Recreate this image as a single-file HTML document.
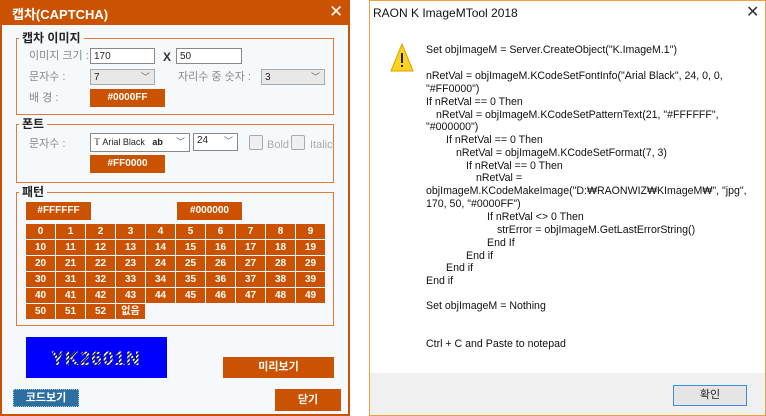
<!DOCTYPE html>
<html><head><meta charset="utf-8"><style>
*{margin:0;padding:0;box-sizing:border-box}
body{width:766px;height:416px;background:#fff;position:relative;overflow:hidden;font-family:"Liberation Sans","Noto Sans CJK KR",sans-serif;font-size:11px;color:#222}
.a{position:absolute;white-space:nowrap}
#L{position:absolute;left:0;top:0;width:350px;height:416px;background:#f5f9fc;border:2px solid #ca5200;border-top:none}
#LT{position:absolute;left:0;top:0;width:350px;height:25px;background:#ca5200;color:#fff;font-weight:bold;font-size:13px}
.grp{position:absolute;border:1px solid #e07a3a}
.lg{position:absolute;background:#f5f9fc;font-weight:bold;font-size:12px;color:#222;padding:0 3px;line-height:14px}
.lbl{position:absolute;color:#888;font-size:11px;line-height:14px}
.inp{position:absolute;background:#fff;border:1px solid #888;font-size:10px;padding-left:3px;line-height:15px}
.sel{position:absolute;background:#e8e8e8;border:1px solid #aaa;font-size:10px;padding-left:3px;line-height:15px}
.btn{position:absolute;background:#ca5200;color:#fff;font-weight:bold;font-size:10px;text-align:center}
.cell{position:absolute;width:29px;height:15px;background:#ca5200;color:#fff;font-weight:bold;font-size:10px;text-align:center;line-height:15px}
.chev{position:absolute;right:4px;top:0;color:#666;font-size:9px}
.cb{position:absolute;width:14px;height:15px;border:1px solid #aaa;background:#f0f0f0;border-radius:2px}
#R{position:absolute;left:369px;top:0;width:397px;height:416px;background:#fff;border:1px solid #f0a040}
.t{position:absolute;white-space:nowrap;font-size:10.6px;color:#111;line-height:13px}
</style></head><body>
<div id="L"></div>
<div id="LT"><span class="a" style="left:12px;top:4px">캡차(CAPTCHA)</span><span class="a" style="left:329px;top:2px;font-size:17px;font-weight:normal">✕</span></div>

<div class="grp" style="left:16px;top:38px;width:318px;height:77px"></div>
<div class="lg" style="left:19px;top:31px">캡차 이미지</div>
<div class="lbl" style="left:29px;top:49px">이미지 크기 :</div>
<div class="inp" style="left:90px;top:48px;width:65px;height:16px">170</div>
<div class="a" style="left:163px;top:50px;font-size:12px;font-weight:bold;color:#333">X</div>
<div class="inp" style="left:176px;top:48px;width:66px;height:16px">50</div>
<div class="lbl" style="left:29px;top:70px">문자수 :</div>
<div class="sel" style="left:90px;top:69px;width:65px;height:16px">7<span class="chev">﹀</span></div>
<div class="lbl" style="left:178px;top:70px">자리수 중 숫자 :</div>
<div class="sel" style="left:261px;top:69px;width:64px;height:16px">3<span class="chev">﹀</span></div>
<div class="lbl" style="left:29px;top:91px">배 경 :</div>
<div class="btn" style="left:90px;top:89px;width:75px;height:18px;line-height:18px">#0000FF</div>

<div class="grp" style="left:16px;top:124px;width:318px;height:59px"></div>
<div class="lg" style="left:19px;top:117px">폰트</div>
<div class="lbl" style="left:29px;top:137px">문자수 :</div>
<div class="inp" style="left:90px;top:133px;width:100px;height:19px;line-height:17px;font-size:9px">𝕋 Arial Black &nbsp; <b>ab</b><span class="chev">﹀</span></div>
<div class="inp" style="left:193px;top:133px;width:45px;height:18px;line-height:14px">24<span class="chev">﹀</span></div>
<div class="cb" style="left:249px;top:135px"></div>
<div class="lbl" style="left:267px;top:138px;color:#aaa">Bold</div>
<div class="cb" style="left:291px;top:135px"></div>
<div class="lbl" style="left:310px;top:138px;color:#aaa">Italic</div>
<div class="btn" style="left:90px;top:155px;width:75px;height:18px;line-height:18px">#FF0000</div>

<div class="grp" style="left:16px;top:192px;width:318px;height:134px"></div>
<div class="lg" style="left:19px;top:185px">패턴</div>
<div class="btn" style="left:26px;top:202px;width:65px;height:18px;line-height:18px">#FFFFFF</div>
<div class="btn" style="left:177px;top:202px;width:65px;height:18px;line-height:18px">#000000</div>

<svg class="a" style="left:26px;top:337px" width="141" height="41" viewBox="0 0 141 41">
<defs><pattern id="p" width="3" height="3" patternUnits="userSpaceOnUse" patternTransform="rotate(45)"><rect width="3" height="3" fill="#fff"/><rect width="1.5" height="3" fill="#222"/></pattern></defs>
<rect width="141" height="41" fill="#0000ff"/>
<text x="70" y="28" text-anchor="middle" font-family="Liberation Sans" font-weight="bold" font-size="19" letter-spacing="1" fill="url(#p)">YK2601N</text>
</svg>
<div class="btn" style="left:223px;top:357px;width:111px;height:21px;line-height:21px;font-size:11px">미리보기</div>
<div class="btn" style="left:13px;top:389px;width:66px;height:18px;line-height:16px;background:#2d6fa0;border:1px dotted #9cc;font-size:11px">코드보기</div>
<div class="btn" style="left:275px;top:389px;width:66px;height:22px;line-height:22px;font-size:11px">닫기</div>

<div id="R">
<div style="position:absolute;left:0;bottom:0;width:395px;height:42px;background:#f0f0f0"></div>
<div class="a" style="left:303px;top:384px;width:74px;height:21px;border:1px solid #3c8ee0;background:#e5e5e5;text-align:center;line-height:19px;font-size:11px">확인</div>
</div>
<div class="a" style="left:373px;top:6px;font-size:12px;color:#111">RAON K ImageMTool 2018</div>
<div class="a" style="left:746px;top:2px;font-size:16px;color:#333">✕</div>
<svg class="a" style="left:390px;top:43px" width="24" height="30" viewBox="0 0 24 30"><path d="M12 1 L23 28 L1 28 Z" fill="#ffd21e" stroke="#d8a400" stroke-width="1"/><rect x="11" y="10" width="2" height="10" fill="#222"/><rect x="11" y="22" width="2" height="2" fill="#222"/></svg>
<div class="t" style="left:426px;top:44px">Set objImageM = Server.CreateObject("K.ImageM.1")</div>
<div class="t" style="left:426px;top:70px">nRetVal = objImageM.KCodeSetFontInfo("Arial Black", 24, 0, 0,</div>
<div class="t" style="left:426px;top:83px">"#FF0000")</div>
<div class="t" style="left:426px;top:96px">If nRetVal == 0 Then</div>
<div class="t" style="left:436px;top:109px">nRetVal = objImageM.KCodeSetPatternText(21, "#FFFFFF",</div>
<div class="t" style="left:426px;top:121px">"#000000")</div>
<div class="t" style="left:446px;top:134px">If nRetVal == 0 Then</div>
<div class="t" style="left:456px;top:147px">nRetVal = objImageM.KCodeSetFormat(7, 3)</div>
<div class="t" style="left:466px;top:160px">If nRetVal == 0 Then</div>
<div class="t" style="left:476px;top:172px">nRetVal =</div>
<div class="t" style="left:426px;top:185px">objImageM.KCodeMakeImage("D:₩RAONWIZ₩KImageM₩", "jpg",</div>
<div class="t" style="left:426px;top:198px">170, 50, "#0000FF")</div>
<div class="t" style="left:487px;top:211px">If nRetVal &lt;&gt; 0 Then</div>
<div class="t" style="left:497px;top:224px">strError = objImageM.GetLastErrorString()</div>
<div class="t" style="left:487px;top:237px">End If</div>
<div class="t" style="left:466px;top:250px">End if</div>
<div class="t" style="left:446px;top:262px">End if</div>
<div class="t" style="left:426px;top:275px">End if</div>
<div class="t" style="left:426px;top:300px">Set objImageM = Nothing</div>
<div class="t" style="left:426px;top:338px">Ctrl + C and Paste to notepad</div>

<div class="cell" style="left:26px;top:224px">0</div><div class="cell" style="left:56px;top:224px">1</div><div class="cell" style="left:86px;top:224px">2</div><div class="cell" style="left:116px;top:224px">3</div><div class="cell" style="left:146px;top:224px">4</div><div class="cell" style="left:176px;top:224px">5</div><div class="cell" style="left:206px;top:224px">6</div><div class="cell" style="left:236px;top:224px">7</div><div class="cell" style="left:266px;top:224px">8</div><div class="cell" style="left:296px;top:224px">9</div>
<div class="cell" style="left:26px;top:240px">10</div><div class="cell" style="left:56px;top:240px">11</div><div class="cell" style="left:86px;top:240px">12</div><div class="cell" style="left:116px;top:240px">13</div><div class="cell" style="left:146px;top:240px">14</div><div class="cell" style="left:176px;top:240px">15</div><div class="cell" style="left:206px;top:240px">16</div><div class="cell" style="left:236px;top:240px">17</div><div class="cell" style="left:266px;top:240px">18</div><div class="cell" style="left:296px;top:240px">19</div>
<div class="cell" style="left:26px;top:256px">20</div><div class="cell" style="left:56px;top:256px">21</div><div class="cell" style="left:86px;top:256px">22</div><div class="cell" style="left:116px;top:256px">23</div><div class="cell" style="left:146px;top:256px">24</div><div class="cell" style="left:176px;top:256px">25</div><div class="cell" style="left:206px;top:256px">26</div><div class="cell" style="left:236px;top:256px">27</div><div class="cell" style="left:266px;top:256px">28</div><div class="cell" style="left:296px;top:256px">29</div>
<div class="cell" style="left:26px;top:272px">30</div><div class="cell" style="left:56px;top:272px">31</div><div class="cell" style="left:86px;top:272px">32</div><div class="cell" style="left:116px;top:272px">33</div><div class="cell" style="left:146px;top:272px">34</div><div class="cell" style="left:176px;top:272px">35</div><div class="cell" style="left:206px;top:272px">36</div><div class="cell" style="left:236px;top:272px">37</div><div class="cell" style="left:266px;top:272px">38</div><div class="cell" style="left:296px;top:272px">39</div>
<div class="cell" style="left:26px;top:288px">40</div><div class="cell" style="left:56px;top:288px">41</div><div class="cell" style="left:86px;top:288px">42</div><div class="cell" style="left:116px;top:288px">43</div><div class="cell" style="left:146px;top:288px">44</div><div class="cell" style="left:176px;top:288px">45</div><div class="cell" style="left:206px;top:288px">46</div><div class="cell" style="left:236px;top:288px">47</div><div class="cell" style="left:266px;top:288px">48</div><div class="cell" style="left:296px;top:288px">49</div>
<div class="cell" style="left:26px;top:304px">50</div><div class="cell" style="left:56px;top:304px">51</div><div class="cell" style="left:86px;top:304px">52</div><div class="cell" style="left:116px;top:304px">없음</div>
</body></html>
